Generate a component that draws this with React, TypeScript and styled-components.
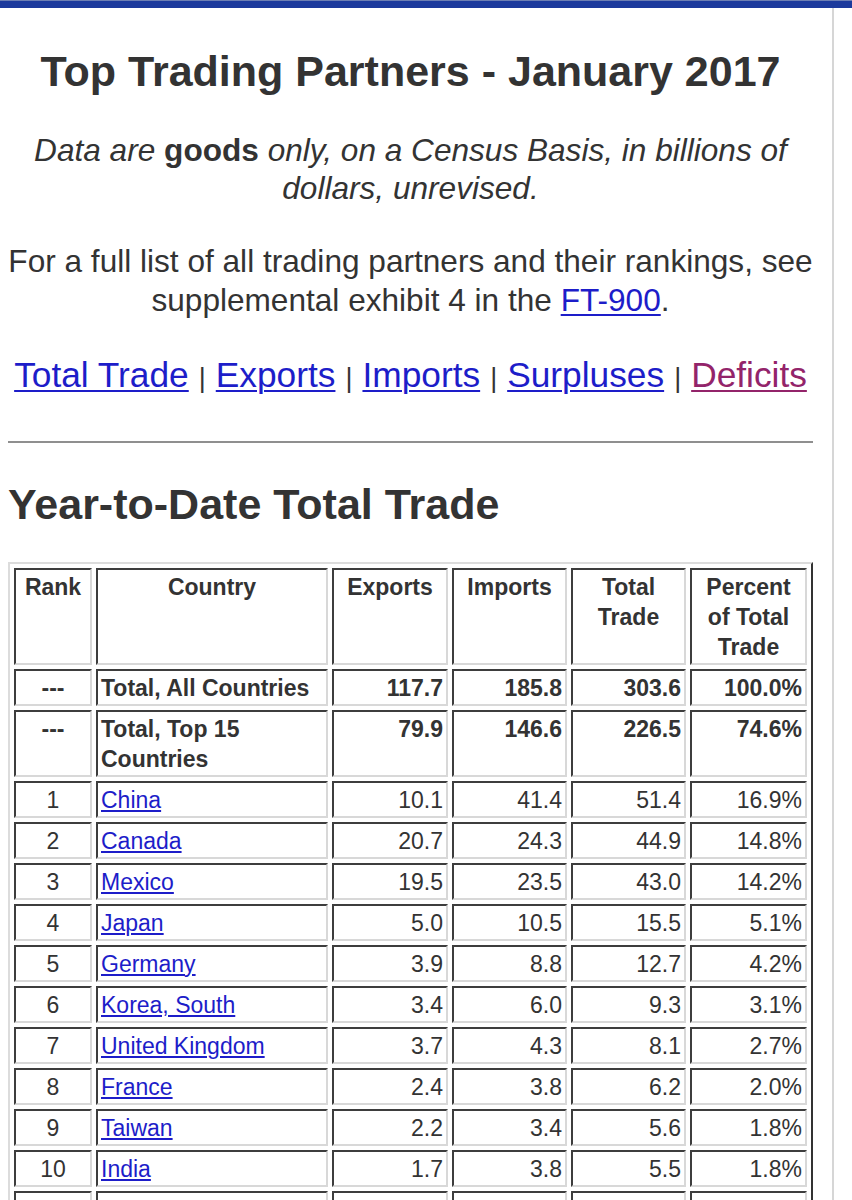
import React from "react";
import styled, { createGlobalStyle } from "styled-components";

const Global = createGlobalStyle`
  html, body { margin: 0; padding: 0; background: #ffffff; }
  body { font-family: "Liberation Sans", Arial, Helvetica, sans-serif; color: #333333; }
`;

const TopBar = styled.div`
  height: 8px;
  background: #1c3a9c;
  border-top: 1px solid #6d7fb3;
  box-sizing: border-box;
`;

const Page = styled.div`
  display: flow-root;
  width: 805px;
  padding: 0 19px 0 8px;
  border-right: 2px solid #d6d6d6;
  min-height: 1192px;
`;

const Title = styled.h1`
  margin: 38px 0 0;
  font-size: 43px;
  line-height: 50px;
  font-weight: bold;
  text-align: center;
  color: #333333;
`;

const Note = styled.p<{ $italic?: boolean; $gap: number }>`
  margin: ${(p) => p.$gap}px 0 0;
  font-size: 31.6px;
  line-height: ${(p) => (p.$italic ? 38 : 39)}px;
  font-style: ${(p) => (p.$italic ? "italic" : "normal")};
  text-align: center;
  color: #333333;
`;

const Strong = styled.b`
  font-style: normal;
  font-weight: bold;
`;

const Link = styled.a<{ $visited?: boolean }>`
  color: ${(p) => (p.$visited ? "#93246a" : "#1d1dc9")};
  text-decoration: underline;
  text-decoration-thickness: 2px;
  text-underline-offset: 3px;
`;

const NavRow = styled.nav`
  margin: 35px 0 0;
  font-size: 35.3px;
  line-height: 40px;
  text-align: center;
  white-space: nowrap;
`;

const Sep = styled.span`
  color: #333333;
  font-size: 27px;
  margin: 0 10px;
`;

const Rule = styled.hr`
  margin: 43px 0 0;
  border: 0;
  height: 2px;
  background: #8f8f8f;
`;

const Section = styled.h2`
  margin: 36px 0 0;
  font-size: 43px;
  line-height: 50px;
  font-weight: bold;
  color: #333333;
`;

const Table = styled.table`
  margin-top: 33px;
  width: 805px;
  table-layout: fixed;
  border-collapse: separate;
  border-spacing: 4px;
  border-style: solid;
  border-width: 2px;
  border-color: #dcdcdc #333333 #333333 #dcdcdc;
  font-size: 23px;
  line-height: 30px;
`;

const cellBase = `
  border-style: solid;
  border-width: 2px;
  border-color: #3d3d3d #d8d8d8 #d8d8d8 #3d3d3d;
  padding: 1.5px 3px;
  vertical-align: top;
`;

const Th = styled.th`
  ${cellBase}
  text-align: center;
  font-weight: bold;
  color: #333333;
`;

const Td = styled.td<{ $align: "left" | "center" | "right"; $bold?: boolean }>`
  ${cellBase}
  text-align: ${(p) => p.$align};
  font-weight: ${(p) => (p.$bold ? "bold" : "normal")};
  color: #333333;
`;

const CountryLink = styled.a`
  color: #1d1dc9;
  text-decoration: underline;
  text-decoration-thickness: 2px;
  text-underline-offset: 2px;
`;

const widths = [78, 232, 116, 115, 115, 117];

type Row = { rank: number; country: string; ex: string; im: string; tot: string; pct: string };

const rows: Row[] = [
  { rank: 1, country: "China", ex: "10.1", im: "41.4", tot: "51.4", pct: "16.9%" },
  { rank: 2, country: "Canada", ex: "20.7", im: "24.3", tot: "44.9", pct: "14.8%" },
  { rank: 3, country: "Mexico", ex: "19.5", im: "23.5", tot: "43.0", pct: "14.2%" },
  { rank: 4, country: "Japan", ex: "5.0", im: "10.5", tot: "15.5", pct: "5.1%" },
  { rank: 5, country: "Germany", ex: "3.9", im: "8.8", tot: "12.7", pct: "4.2%" },
  { rank: 6, country: "Korea, South", ex: "3.4", im: "6.0", tot: "9.3", pct: "3.1%" },
  { rank: 7, country: "United Kingdom", ex: "3.7", im: "4.3", tot: "8.1", pct: "2.7%" },
  { rank: 8, country: "France", ex: "2.4", im: "3.8", tot: "6.2", pct: "2.0%" },
  { rank: 9, country: "Taiwan", ex: "2.2", im: "3.4", tot: "5.6", pct: "1.8%" },
  { rank: 10, country: "India", ex: "1.7", im: "3.8", tot: "5.5", pct: "1.8%" },
  { rank: 11, country: "Italy", ex: "1.4", im: "3.3", tot: "4.7", pct: "1.6%" },
];

export default function App() {
  return (
    <>
      <Global />
      <TopBar />
      <Page>
        <Title>Top Trading Partners - January 2017</Title>
        <Note $italic $gap={35}>
          Data are <Strong>goods</Strong> only, on a Census Basis, in billions of dollars, unrevised.
        </Note>
        <Note $gap={35}>
          For a full list of all trading partners and their rankings, see supplemental exhibit 4 in the{" "}
          <Link href="#">FT-900</Link>.
        </Note>
        <NavRow>
          <Link href="#">Total Trade</Link>
          <Sep>|</Sep>
          <Link href="#">Exports</Link>
          <Sep>|</Sep>
          <Link href="#">Imports</Link>
          <Sep>|</Sep>
          <Link href="#">Surpluses</Link>
          <Sep>|</Sep>
          <Link href="#" $visited>
            Deficits
          </Link>
        </NavRow>
        <Rule />
        <Section>Year-to-Date Total Trade</Section>
        <Table>
          <colgroup>
            {widths.map((w, i) => (
              <col key={i} style={{ width: w }} />
            ))}
          </colgroup>
          <thead>
            <tr>
              <Th>Rank</Th>
              <Th>Country</Th>
              <Th>Exports</Th>
              <Th>Imports</Th>
              <Th>Total Trade</Th>
              <Th>Percent of Total Trade</Th>
            </tr>
          </thead>
          <tbody>
            <tr>
              <Td $align="center" $bold>---</Td>
              <Td $align="left" $bold>Total, All Countries</Td>
              <Td $align="right" $bold>117.7</Td>
              <Td $align="right" $bold>185.8</Td>
              <Td $align="right" $bold>303.6</Td>
              <Td $align="right" $bold>100.0%</Td>
            </tr>
            <tr>
              <Td $align="center" $bold>---</Td>
              <Td $align="left" $bold>Total, Top 15 Countries</Td>
              <Td $align="right" $bold>79.9</Td>
              <Td $align="right" $bold>146.6</Td>
              <Td $align="right" $bold>226.5</Td>
              <Td $align="right" $bold>74.6%</Td>
            </tr>
            {rows.map((r) => (
              <tr key={r.rank}>
                <Td $align="center">{r.rank}</Td>
                <Td $align="left">
                  <CountryLink href="#">{r.country}</CountryLink>
                </Td>
                <Td $align="right">{r.ex}</Td>
                <Td $align="right">{r.im}</Td>
                <Td $align="right">{r.tot}</Td>
                <Td $align="right">{r.pct}</Td>
              </tr>
            ))}
          </tbody>
        </Table>
      </Page>
    </>
  );
}
